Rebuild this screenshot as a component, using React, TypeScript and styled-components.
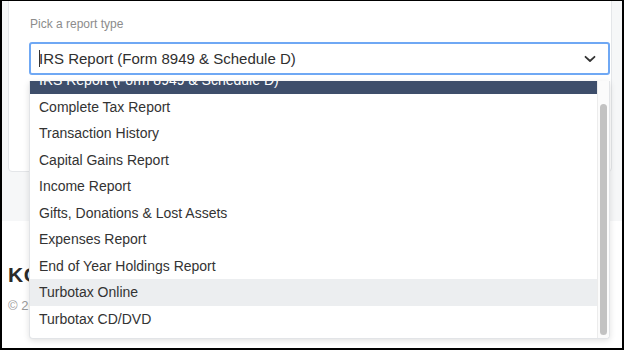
import React from 'react';
import styled, { createGlobalStyle } from 'styled-components';

const GlobalStyle = createGlobalStyle`
  html, body {
    margin: 0;
    padding: 0;
    background: #ffffff;
    font-family: "Liberation Sans", Arial, sans-serif;
  }
`;

const Frame = styled.div`
  width: 624px;
  height: 350px;
  box-sizing: border-box;
  border: 2px solid #000;
  border-top-width: 1px;
  overflow: hidden;
  background: #fff;
  display: flex;
  flex-direction: column;
`;

const Section = styled.div`
  background: #f6f7f8;
  padding: 0 10px 49px 6px;
`;

const Card = styled.div`
  margin-top: -10px;
  height: 181px;
  box-sizing: border-box;
  background: #fff;
  border: 1px solid #e4e6e9;
  border-radius: 4px;
  padding: 25px 0 0 20px;
`;

const Label = styled.div`
  font-size: 12px;
  color: #8c8c8c;
  line-height: 14px;
  margin-left: 1px;
`;

const Field = styled.div`
  position: relative;
  margin-top: 11px;
  width: 581px;
`;

const SelectBox = styled.div`
  height: 33px;
  box-sizing: border-box;
  border: 2px solid #6fa8f4;
  border-radius: 3px;
  display: flex;
  align-items: center;
  padding: 0 12px 0 8px;
  font-size: 15px;
  color: #2f2f2f;
`;

const Caret = styled.span`
  display: inline-block;
  width: 1px;
  height: 17px;
  background: #333;
  margin-right: -1px;
`;

const Value = styled.span`
  flex: 1;
`;

const Menu = styled.div`
  position: absolute;
  top: 39px;
  left: 0;
  right: 0;
  height: 258px;
  box-sizing: border-box;
  background: #fff;
  border: 1px solid #e2e4e7;
  border-top: none;
  border-radius: 0 0 4px 4px;
  box-shadow: 0 2px 6px rgba(0, 0, 0, 0.12);
  display: flex;
  overflow: hidden;
  z-index: 5;
`;

const Viewport = styled.div`
  flex: 1;
  overflow: hidden;
`;

const OptionList = styled.div`
  margin-top: -14px;
`;

const Option = styled.div<{ $state?: 'selected' | 'hover' }>`
  height: 26.5px;
  display: flex;
  align-items: center;
  padding-left: 9px;
  font-size: 14px;
  color: ${p => (p.$state === 'selected' ? '#ffffff' : '#333333')};
  background: ${p =>
    p.$state === 'selected' ? '#3e4e6b' : p.$state === 'hover' ? '#eceef0' : 'transparent'};
`;

const Track = styled.div`
  width: 12px;
  border-left: 1px solid #ececec;
  background: #fbfbfb;
  padding: 23px 2px 3px 2px;
  box-sizing: border-box;
  display: flex;
`;

const Thumb = styled.div`
  flex: 1;
  background: #c2c2c2;
  border-radius: 4px;
`;

const Footer = styled.div`
  padding: 42px 0 0 6px;
`;

const Brand = styled.div`
  font-size: 21px;
  font-weight: 700;
  color: #2a2a2a;
  letter-spacing: 0.5px;
`;

const Copy = styled.div`
  margin-top: 11px;
  font-size: 13px;
  color: #9a9a9a;
`;

const options = [
  'IRS Report (Form 8949 & Schedule D)',
  'Complete Tax Report',
  'Transaction History',
  'Capital Gains Report',
  'Income Report',
  'Gifts, Donations & Lost Assets',
  'Expenses Report',
  'End of Year Holdings Report',
  'Turbotax Online',
  'Turbotax CD/DVD',
];

const Chevron = () => (
  <svg width="12" height="8" viewBox="0 0 12 8" fill="none">
    <path d="M1.5 1.8 L6 6 L10.5 1.8" stroke="#333" strokeWidth="1.8" strokeLinecap="round" strokeLinejoin="round" />
  </svg>
);

export default function App() {
  return (
    <>
      <GlobalStyle />
      <Frame>
        <Section>
          <Card>
            <Label>Pick a report type</Label>
            <Field>
              <SelectBox>
                <Caret />
                <Value>IRS Report (Form 8949 &amp; Schedule D)</Value>
                <Chevron />
              </SelectBox>
              <Menu>
                <Viewport>
                  <OptionList>
                    {options.map((o, i) => (
                      <Option key={o} $state={i === 0 ? 'selected' : i === 8 ? 'hover' : undefined}>
                        {o}
                      </Option>
                    ))}
                  </OptionList>
                </Viewport>
                <Track>
                  <Thumb />
                </Track>
              </Menu>
            </Field>
          </Card>
        </Section>
        <Footer>
          <Brand>KOINLY</Brand>
          <Copy>© 2023 Koinly</Copy>
        </Footer>
      </Frame>
    </>
  );
}
